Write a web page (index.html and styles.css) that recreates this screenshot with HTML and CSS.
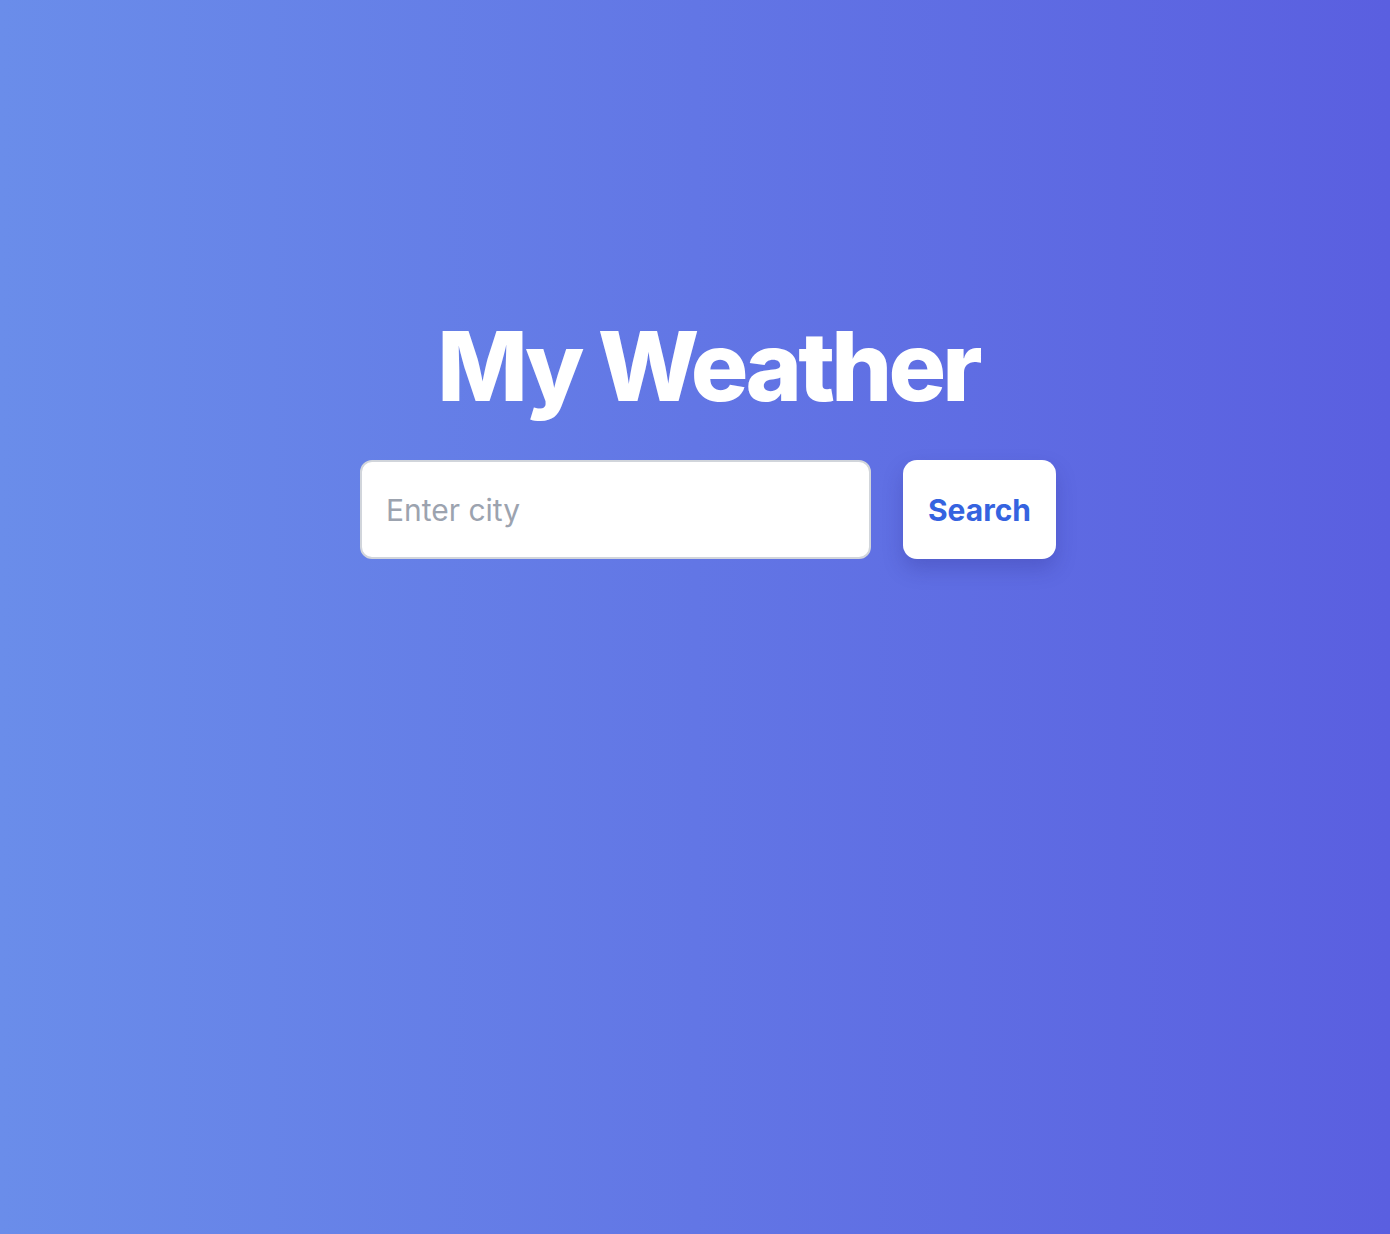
FILE: index.html
```html
<!DOCTYPE html>
<html lang="en">
<head>
<meta charset="utf-8">
<title>My Weather</title>
<link rel="stylesheet" href="styles.css">
</head>
<body>
<main class="app">
  <h1 class="title">My Weather</h1>
  <form class="search" onsubmit="return false;">
    <input class="search-input" type="text" placeholder="Enter city">
    <button class="search-btn" type="submit">Search</button>
  </form>
</main>
</body>
</html>
```
FILE: styles.css
```css
html, body {
  margin: 0;
  padding: 0;
}
body {
  min-height: 100vh;
  background: linear-gradient(90deg, #6a8dea 0%, #5a5fe0 100%);
  font-family: Inter, "Noto Sans", sans-serif;
}
.app {
  display: flex;
  flex-direction: column;
  align-items: center;
  padding-top: 318px;
  padding-left: 26px;
}
.title {
  margin: 0 0 46px;
  color: #ffffff;
  font-size: 96px;
  font-weight: 800;
  line-height: 1;
  letter-spacing: -0.04em;
}
.search {
  display: flex;
  gap: 32px;
}
.search-input {
  box-sizing: border-box;
  width: 511px;
  height: 99px;
  border: 2px solid #d1d5db;
  border-radius: 12px;
  padding: 0 24px;
  font-family: Inter, "Noto Sans", sans-serif;
  font-size: 30px;
  color: #1f2937;
  background: #ffffff;
  outline: none;
}
.search-input::placeholder {
  color: #9ca3af;
}
.search-btn {
  box-sizing: border-box;
  height: 99px;
  padding: 0 25px;
  border: none;
  border-radius: 14px;
  background: #ffffff;
  color: #3563e0;
  font-family: Inter, "Noto Sans", sans-serif;
  font-size: 30px;
  font-weight: 700;
  box-shadow: 0 10px 20px rgba(40, 40, 130, 0.25);
  cursor: pointer;
}
```
